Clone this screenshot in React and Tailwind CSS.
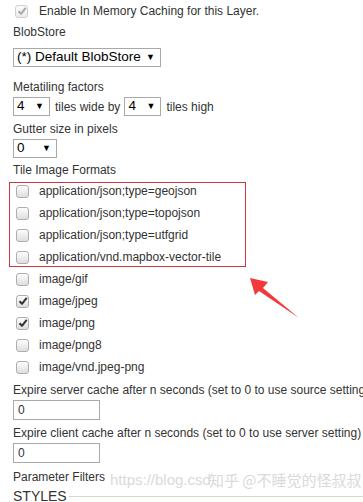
import React from "react";

function Box({ checked, disabled }) {
  return (
    <span
      className={
        "relative inline-flex h-[13px] w-[13px] shrink-0 items-center justify-center rounded-[3px] border " +
        (disabled
          ? "border-[#cfcfcf] bg-gradient-to-b from-[#fbfbfb] to-[#ececec]"
          : "border-[#aeaeae] bg-gradient-to-b from-[#fdfdfd] to-[#dedede]")
      }
    >
      {checked && (
        <svg width="10" height="10" viewBox="0 0 10 10" className="absolute">
          <path
            d="M1.5 5.2 L4 7.8 L8.7 1.8"
            fill="none"
            stroke={disabled ? "#a8a8a8" : "#333"}
            strokeWidth="2"
            strokeLinejoin="round"
          />
        </svg>
      )}
    </span>
  );
}

function Sel({ value, w }) {
  return (
    <span
      className={
        "inline-flex h-[19px] items-center justify-between whitespace-nowrap border border-[#a9a9a9] bg-white pl-[3px] pr-[5px] text-[13.5px] text-black " +
        w
      }
      style={{ fontFamily: "Arial, 'Liberation Sans', sans-serif" }}
    >
      <span className="whitespace-nowrap">{value}</span>
      <span className="shrink-0 text-[9px] leading-none">▼</span>
    </span>
  );
}

const formats = [
  ["application/json;type=geojson", false],
  ["application/json;type=topojson", false],
  ["application/json;type=utfgrid", false],
  ["application/vnd.mapbox-vector-tile", false],
  ["image/gif", false],
  ["image/jpeg", true],
  ["image/png", true],
  ["image/png8", false],
  ["image/vnd.jpeg-png", false],
];

export default function App() {
  return (
    <div
      className="relative h-[502px] w-[363px] overflow-hidden bg-white text-[12px] text-[#333]"
      style={{ fontFamily: "'Liberation Sans', Arial, sans-serif" }}
    >
      <div className="flex h-[22px] items-center gap-[11px] pl-[15px]">
        <Box checked disabled />
        <span>Enable In Memory Caching for this Layer.</span>
      </div>
      <div className="flex h-[20px] items-center pl-[13px]">BlobStore</div>
      <div className="mt-[6px] flex pl-[13px]">
        <Sel value="(*) Default BlobStore" w="w-[148px]" />
      </div>
      <div className="mt-[10px] flex h-[20px] items-center pl-[13px]">Metatiling factors</div>
      <div className="flex h-[19px] items-center pl-[13px]">
        <Sel value="4" w="w-[37px]" />
        <span className="ml-[5px] mr-[4px]">tiles wide by</span>
        <Sel value="4" w="w-[37px]" />
        <span className="ml-[5px]">tiles high</span>
      </div>
      <div className="mt-[3px] flex h-[20px] items-center pl-[13px]">Gutter size in pixels</div>
      <div className="flex pl-[13px]">
        <Sel value="0" w="w-[44px]" />
      </div>
      <div className="mt-[2px] flex h-[20px] items-center pl-[13px]">Tile Image Formats</div>
      <div className="relative">
        {formats.map(([name, c]) => (
          <div key={name} className="flex h-[22px] items-center gap-[10px] pl-[16px]">
            <Box checked={c} />
            <span>{name}</span>
          </div>
        ))}
        <div className="pointer-events-none absolute left-[9px] top-[2px] h-[85px] w-[237px] border border-[#c9383d]" />
      </div>
      <div className="mt-[2px] flex h-[20px] items-center whitespace-nowrap pl-[13px]">
        Expire server cache after n seconds (set to 0 to use source settings)
      </div>
      <div className="pl-[13px]">
        <div className="flex h-[20px] w-[87px] items-center border border-[#a9a9a9] pl-[4px]">0</div>
      </div>
      <div className="mt-[3px] flex h-[20px] items-center whitespace-nowrap pl-[13px]">
        Expire client cache after n seconds (set to 0 to use server setting)
      </div>
      <div className="pl-[13px]">
        <div className="flex h-[20px] w-[87px] items-center border border-[#a9a9a9] pl-[4px]">0</div>
      </div>
      <div className="mt-[4px] flex h-[20px] items-center pl-[13px]">Parameter Filters</div>
      <div className="flex h-[18px] items-center pl-[13px]">
        <span className="text-[14px] text-[#333]">STYLES</span>
        <div className="ml-[2px] h-px flex-1 bg-[#d5d9c6]" />
      </div>

      <div
        className="pointer-events-none absolute left-[110px] top-[469px] flex items-center whitespace-nowrap text-[15px] text-[#dadada]"
        style={{ fontFamily: "'Liberation Sans', 'Noto Sans CJK SC', sans-serif" }}
      >
        <span>https://blog.csd</span>
        <span className="ml-[-2px]" style={{ fontFamily: "'Noto Sans CJK SC', sans-serif" }}>
          知乎 @不睡觉的怪叔叔
        </span>
      </div>

      <svg
        className="pointer-events-none absolute left-0 top-0"
        width="363"
        height="502"
        viewBox="0 0 363 502"
      >
        <polygon
          points="250,278 268,282 263,288 299,318 259,291 255,295"
          fill="#f23a3a"
        />
      </svg>
    </div>
  );
}
